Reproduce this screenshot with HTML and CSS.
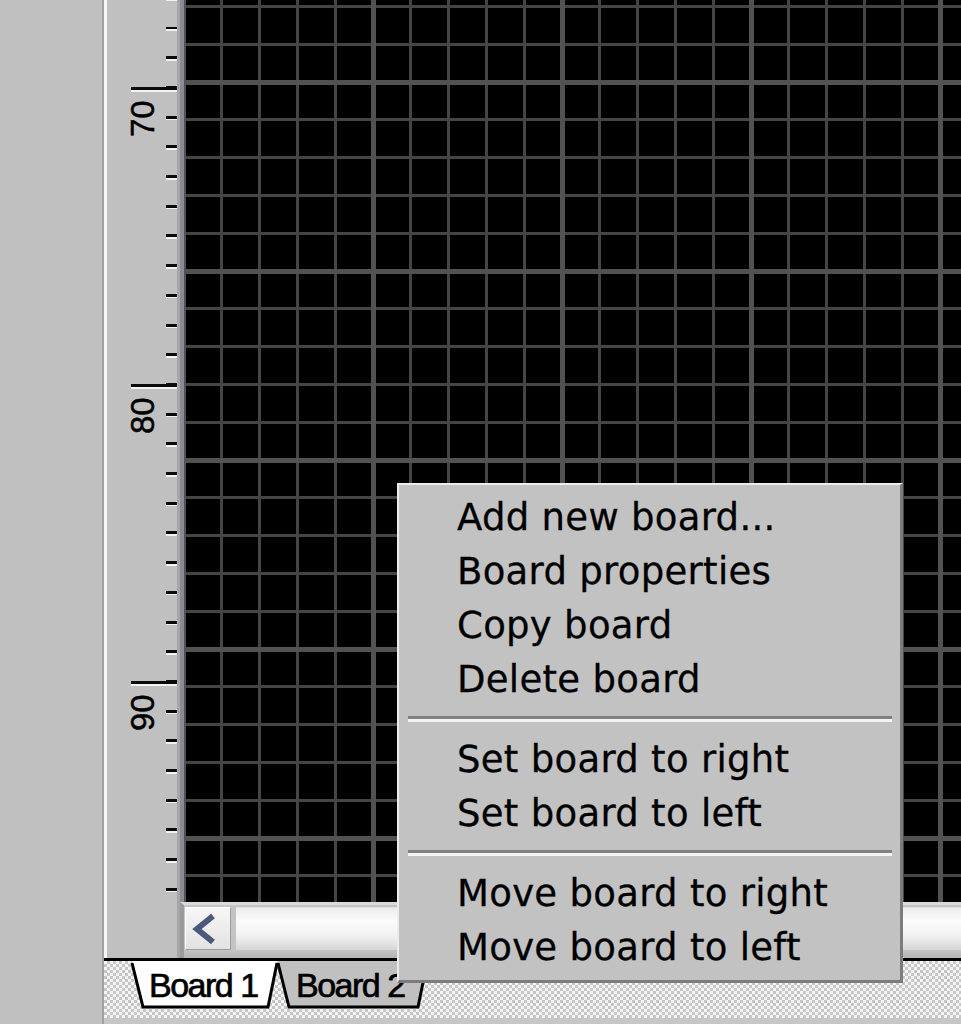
FILE: index.html
```html
<!DOCTYPE html>
<html lang="en">
<head>
<meta charset="utf-8">
<title>Boards</title>
<link rel="stylesheet" href="styles.css">
</head>
<body>
<div class="app">
  <div class="desk"></div>
  <div class="main">
    <div class="workspace">
      <div class="ruler">
        <div class="major"><div class="major-tick"></div><div class="label">70</div></div>
        <div class="major"><div class="major-tick"></div><div class="label">80</div></div>
        <div class="major"><div class="major-tick"></div><div class="label">90</div></div>
      </div>
      <div class="canvas-col">
        <div class="grid"></div>
        <div class="hscroll">
          <div class="sb-btn">
            <svg width="44" height="40" viewBox="0 0 44 40"><polyline points="27,7 11,20 27,33" fill="none" stroke="#4b5a7c" stroke-width="6"/></svg>
          </div>
          <div class="sb-track"></div>
        </div>
      </div>
    </div>
    <div class="tabbar">
      <div class="tab tab-active">
        <svg class="tab-shape" width="152" height="49" viewBox="0 0 152 49">
          <polygon points="4,0 15,46 140,46 149,0" fill="#ffffff"/>
          <polyline points="4,2 15,46 140,46 149,2" fill="none" stroke="#000" stroke-width="3"/>
        </svg>
        <span class="tab-label">Board 1</span>
      </div>
      <div class="tab">
        <svg class="tab-shape" width="152" height="49" viewBox="0 0 152 49">
          <polygon points="2,0 13,46 142,46 151,0" fill="#c0c0c0"/>
          <polyline points="2,2 13,46 142,46 151,2" fill="none" stroke="#000" stroke-width="3"/>
        </svg>
        <span class="tab-label">Board 2</span>
      </div>
    </div>
  </div>

  <div class="menu">
    <div class="item">Add new board...</div>
    <div class="item">Board properties</div>
    <div class="item">Copy board</div>
    <div class="item">Delete board</div>
    <div class="sep"></div>
    <div class="item">Set board to right</div>
    <div class="item">Set board to left</div>
    <div class="sep"></div>
    <div class="item">Move board to right</div>
    <div class="item">Move board to left</div>
  </div>
</div>
</body>
</html>
```

FILE: styles.css
```css
html, body {
  margin: 0;
  padding: 0;
}
body {
  width: 961px;
  height: 1024px;
  overflow: hidden;
  background: #c0c0c0;
  font-family: "DejaVu Sans", sans-serif;
}
.app {
  position: relative;
  display: flex;
  width: 961px;
  height: 1024px;
}
.desk {
  width: 104px;
  flex: none;
  box-sizing: border-box;
  background: #c0c0c0;
  border-right: 2px solid #a2a2a2;
}
.main {
  flex: 1;
  min-width: 0;
  display: flex;
  flex-direction: column;
}
.workspace {
  display: flex;
  height: 958px;
  flex: none;
}
.ruler {
  width: 76px;
  flex: none;
  box-sizing: border-box;
  border-left: 3px solid #f7f7f7;
  border-right: 3px solid #a6a6a6;
  padding-top: 86.5px;
  background-color: #c0c0c0;
  background-image: repeating-linear-gradient(to bottom,
    #f2f2f2 0 1.3px,
    transparent 1.3px 26.5px,
    #0a0a0a 26.5px 29.5px,
    #f2f2f2 29.5px 29.7px);
  background-size: 11px 902px;
  background-position: right top;
  background-repeat: no-repeat;
}
.major {
  height: 297px;
}
.major-tick {
  width: 46px;
  height: 3px;
  margin-left: auto;
  background: #0a0a0a;
  border-bottom: 2px solid #f2f2f2;
}
.label {
  margin-top: 8px;
  margin-left: 24px;
  width: 24px;
  height: 37px;
  line-height: 24px;
  writing-mode: vertical-rl;
  transform: rotate(180deg);
  font-family: "Liberation Sans", Arial, sans-serif;
  font-size: 33px;
  -webkit-text-stroke: 0.5px #000;
  color: #000;
  white-space: nowrap;
}
.canvas-col {
  flex: 1;
  min-width: 0;
  display: flex;
  flex-direction: column;
}
.grid {
  flex: 1;
  border-left: 4px solid #8a8a96;
  background:
    repeating-linear-gradient(to right, #525252 0 2.5px, transparent 2.5px 186.5px, #525252 186.5px 189px),
    repeating-linear-gradient(to bottom, transparent 0 79.5px, #525252 79.5px 84.5px, transparent 84.5px 189px),
    repeating-linear-gradient(to right, #454545 0 1.5px, transparent 1.5px 36.3px, #454545 36.3px 37.8px),
    repeating-linear-gradient(to bottom, transparent 0 4.9px, #454545 4.9px 7.9px, transparent 7.9px 37.8px),
    #000;
}
.hscroll {
  height: 56px;
  flex: none;
  box-sizing: border-box;
  display: flex;
  border-top: 3px solid #dadada;
  border-left: 4px solid #9a9a9a;
  padding: 2px 0 8px 1px;
  background: linear-gradient(to bottom, #c4c4c4 0, #c4c4c4 85%, #b4b4b4 100%);
}
.sb-btn {
  width: 46px;
  flex: none;
  box-sizing: border-box;
  border: 1px solid;
  border-color: #fdfdfd #9c9c9c #9c9c9c #fdfdfd;
  background: linear-gradient(to bottom, #f7f7f7, #e2e2e2);
  display: flex;
  align-items: center;
  justify-content: center;
}
.sb-btn svg {
  display: block;
}
.sb-track {
  flex: 1;
  margin-left: 5px;
  border-top: 1px solid #e2e2e2;
  background: linear-gradient(to bottom, #ececec 0, #fbfbfb 30%, #f2f2f2 65%, #d6d6d6 100%);
}
.tabbar {
  flex: 1;
  display: flex;
  align-items: flex-start;
  box-sizing: border-box;
  border-top: 3px solid #000;
  border-bottom: 6px solid #c6c6c6;
  padding-left: 24px;
  background: conic-gradient(#c6c6c6 25%, #f4f4f4 0 50%, #c6c6c6 0 75%, #f4f4f4 0) 0 0 / 6px 6px;
}
.tab {
  position: relative;
  width: 152px;
  height: 49px;
  flex: none;
}
.tab + .tab {
  margin-left: -4px;
}
.tab-active {
  z-index: 1;
}
.tab-shape {
  position: absolute;
  left: 0;
  top: 0;
}
.tab-label {
  position: relative;
  display: block;
  padding-left: 21px;
  line-height: 49px;
  font-family: "Liberation Sans", Arial, sans-serif;
  font-size: 34px;
  letter-spacing: -1.5px;
  -webkit-text-stroke: 0.7px #000;
  color: #000;
  white-space: nowrap;
}
.tab + .tab .tab-label {
  padding-left: 20px;
}
.menu {
  position: absolute;
  left: 397px;
  top: 483px;
  width: 506px;
  height: 500px;
  box-sizing: border-box;
  z-index: 5;
  background: #c2c2c2;
  border-style: solid;
  border-width: 2px 3px 3px 2px;
  border-color: #ececec #7c7c7c #7c7c7c #ececec;
  padding: 6px 0 5px 0;
}
.item {
  height: 54px;
  line-height: 54px;
  padding-left: 58px;
  font-size: 37px;
  letter-spacing: 0.3px;
  -webkit-text-stroke: 0.3px #000;
  color: #000;
  white-space: nowrap;
}
.sep {
  height: 0;
  margin: 9px 8px 11px 9px;
  border-top: 3px solid #808080;
  border-bottom: 3px solid #f4f4f4;
}
```
